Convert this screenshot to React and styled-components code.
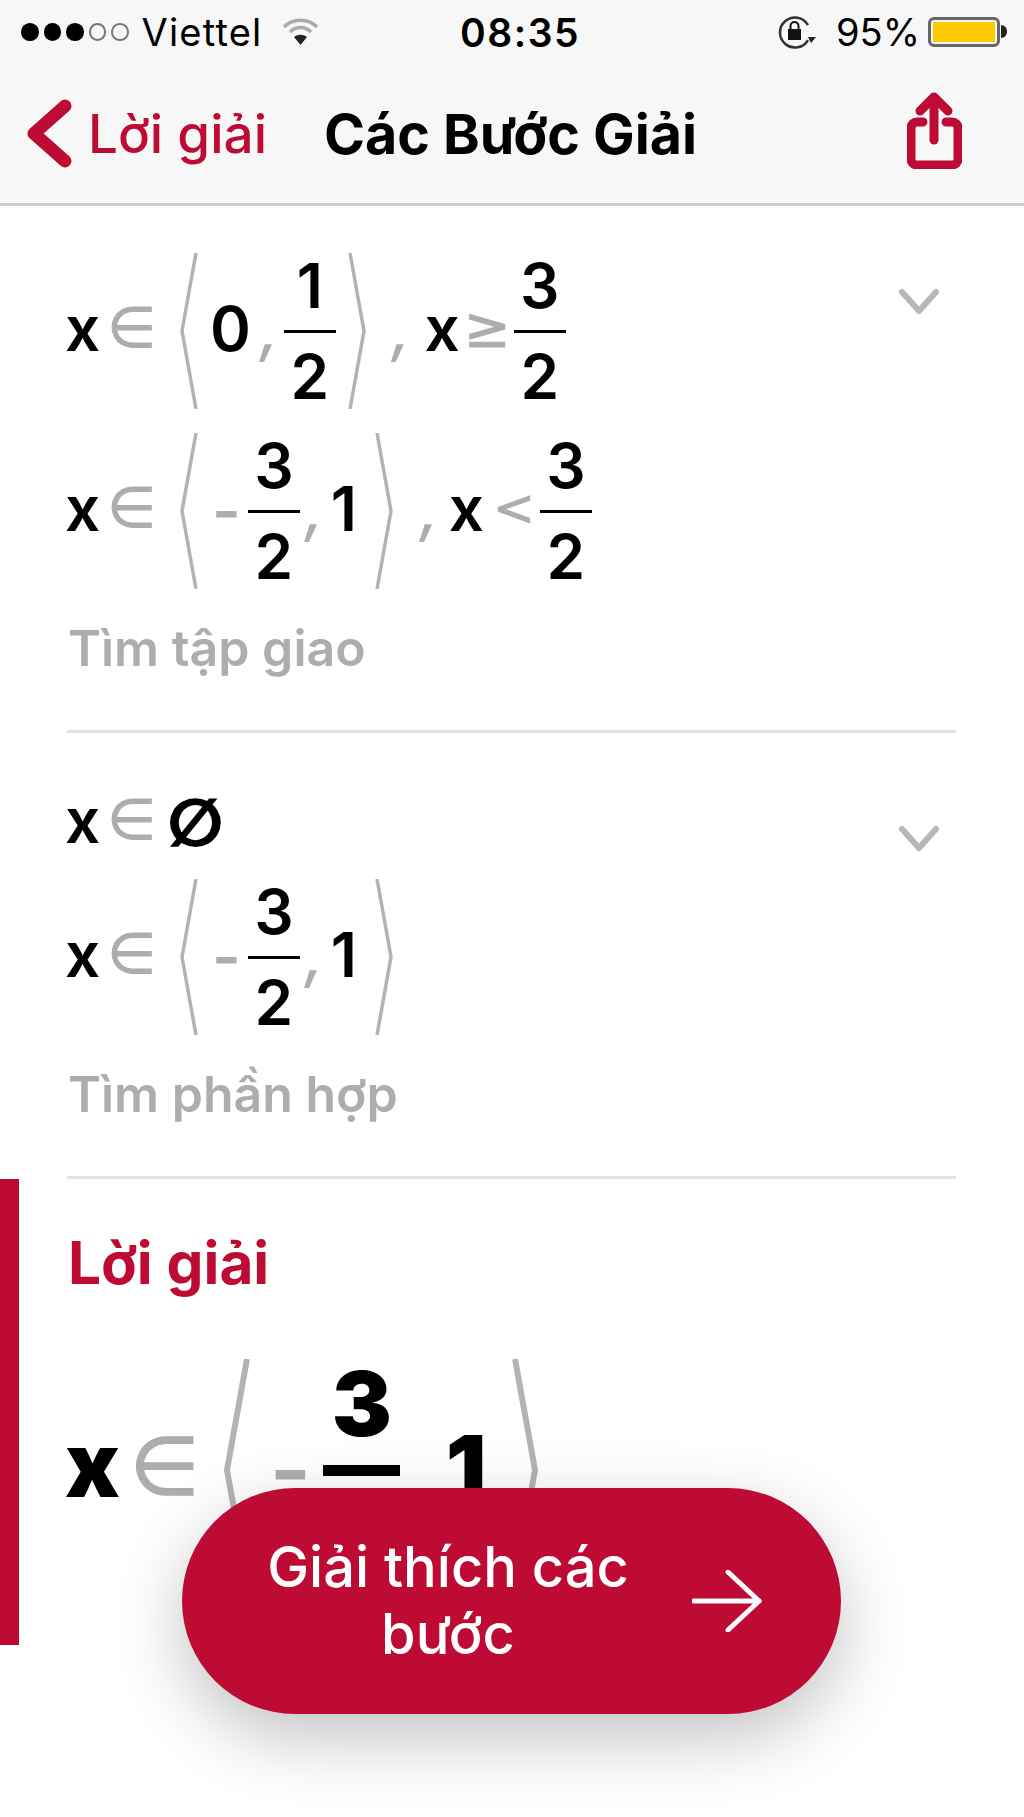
import React from 'react'
import styled, { createGlobalStyle } from 'styled-components'

const RED = '#bd0b33'
const GREY = '#adadad'

const GlobalStyle = createGlobalStyle`
  html, body {
    margin: 0;
    padding: 0;
    background: #fff;
  }
  * {
    box-sizing: border-box;
  }
`

const Page = styled.div`
  position: relative;
  width: 1024px;
  height: 1817px;
  overflow: hidden;
  background: #fff;
  color: #000;
  font-family: Inter, "Liberation Sans", sans-serif;
`

const Header = styled.header`
  height: 206px;
  background: #f7f7f7;
  border-bottom: 3px solid #cfcfcf;
`

const StatusBar = styled.div`
  display: grid;
  grid-template-columns: 439px auto 1fr;
  align-items: center;
  height: 64px;
  padding: 0 17px 0 21px;
  font-size: 38px;
`

const StatusLeft = styled.div`
  display: flex;
  align-items: center;
`

const Signal = styled.div`
  display: flex;
  gap: 5px;
  margin-right: 13px;
`

const Dot = styled.span`
  width: 17.5px;
  height: 17.5px;
  border-radius: 50%;
  background: ${({ $on }) => ($on ? '#000' : 'transparent')};
  border: ${({ $on }) => ($on ? 'none' : '2px solid #777')};
`

const Carrier = styled.span`
  margin-right: 20px;
  letter-spacing: 1.2px;
`

const Clock = styled.span`
  font-size: 39px;
  font-weight: 600;
  letter-spacing: 1.5px;
`

const StatusRight = styled.div`
  display: flex;
  align-items: center;
  justify-content: flex-end;
`

const Percent = styled.span`
  margin: 0 8px 0 19px;
`

const Battery = styled.div`
  position: relative;
  width: 72px;
  height: 30px;
  padding: 2px;
  border: 3px solid #666;
  border-radius: 6px;
  margin-right: 7px;

  &::after {
    content: '';
    position: absolute;
    right: -10px;
    top: 5px;
    width: 6px;
    height: 13px;
    border-radius: 0 6px 6px 0;
    background: #222;
  }
`

const BatteryFill = styled.div`
  height: 100%;
  background: #fdc900;
`

const NavBar = styled.nav`
  display: flex;
  align-items: center;
  height: 139px;
  padding: 0 62px 0 27px;
`

const BackLabel = styled.span`
  margin: 0 57px 0 16px;
  color: ${RED};
  font-size: 53px;
  font-weight: 500;
`

const Title = styled.h1`
  margin: 0;
  font-size: 55.5px;
  font-weight: 700;
`

const ShareButton = styled.svg`
  margin: 0 0 6px auto;
`

const Step = styled.section`
  display: flex;
  justify-content: space-between;
  margin: 0 68px 0 67px;
  padding: ${({ $top }) => $top}px 0 ${({ $bottom }) => $bottom}px;
  border-bottom: 3px solid #e2e2e2;
`

const StepBody = styled.div`
  display: flex;
  flex-direction: column;
`

const Expand = styled.svg`
  margin: ${({ $top }) => $top}px 16px 0 0;
`

const MathRow = styled.div`
  display: flex;
  align-items: center;
  height: ${({ $height }) => $height || 156}px;
  margin-bottom: ${({ $gap }) => $gap || 0}px;
  font-size: 62px;
  font-weight: 600;
  line-height: 62px;
`

const Var = styled.span`
  margin: 0 0 ${({ $lift }) => $lift || 4}px ${({ $left }) => $left || 0}px;
`

const Sign = styled.span`
  margin: 0 0 6px ${({ $left }) => $left || 0}px;
  color: ${GREY};
  font-weight: 400;
  font-family: "DejaVu Sans", sans-serif;
  font-size: ${({ $size }) => $size || 56}px;
  -webkit-text-stroke: ${({ $stroke }) => $stroke || 1}px ${GREY};
`

const Minus = styled.span`
  margin-left: ${({ $left }) => $left || 0}px;
  color: ${GREY};
  font-weight: 600;
`

const Comma = styled.span`
  margin: 0 0 4px ${({ $left }) => $left || 0}px;
  color: ${GREY};
  font-weight: 500;
  font-style: italic;
`

const Value = styled.span`
  margin: 0 0 4px ${({ $left }) => $left || 0}px;
`

const EmptySet = styled.span`
  margin-left: 12px;
  font-family: "DejaVu Sans", sans-serif;
  font-size: 64px;
  font-weight: 700;
  -webkit-text-stroke: 2px #000;
`

const Frac = styled.span`
  display: flex;
  flex-direction: column;
  align-items: center;
  gap: 21px;
  width: ${({ $width }) => $width || 52}px;
  margin-left: ${({ $left }) => $left || 0}px;
  line-height: 46px;
`

const FracLine = styled.span`
  width: 100%;
  height: 3px;
  background: #000;
`

const Angle = styled.svg`
  flex: none;
  margin-left: ${({ $left }) => $left || 0}px;
`

const Caption = styled.p`
  margin: 29px 0 0 1px;
  color: ${GREY};
  font-size: 50px;
  font-weight: 600;
  line-height: 60px;
`

const Answer = styled.section`
  height: 466px;
  padding: 54px 0 0 48px;
  border-left: 19px solid ${RED};
`

const AnswerTitle = styled.h2`
  margin: 0 0 66px 1px;
  color: ${RED};
  font-size: 58.5px;
  font-weight: 700;
  line-height: 60px;
`

const BigRow = styled(MathRow)`
  font-size: 90px;
  font-weight: 900;
  line-height: 90px;
`

const BigFrac = styled(Frac)`
  gap: 28px;
  line-height: 66px;
`

const BigLine = styled(FracLine)`
  height: 11px;
`

const ExplainButton = styled.button`
  position: absolute;
  left: 182px;
  top: 1488px;
  display: flex;
  align-items: center;
  width: 659px;
  height: 226px;
  padding: 0 0 0 66px;
  border: none;
  border-radius: 113px;
  background: ${RED};
  box-shadow: 0 24px 70px rgba(0, 0, 0, 0.24);
  color: #fff;
  font-family: Inter, "Liberation Sans", sans-serif;
  font-size: 56px;
  font-weight: 500;
  line-height: 67px;
`

const ExplainLabel = styled.span`
  width: 400px;
  margin-right: 44px;
  text-align: center;
`

const Wifi = () => (
  <svg width="37" height="28" viewBox="0 0 37 28" fill="none" stroke="#aaa" strokeWidth="3.5">
    <path d="M2 9 C11 0 26 0 35 9" />
    <path d="M8 14 C14 8 23 8 29 14" />
    <path d="M18.5 27 L12 19 C16 16 21 16 25 19 Z" fill="#222" stroke="none" />
  </svg>
)

const RotationLock = () => (
  <svg width="40" height="34" viewBox="0 0 40 34" fill="none">
    <path d="M31 25 A15 15 0 1 1 31 10" stroke="#333" strokeWidth="2.5" />
    <path d="M31 22 L39 22 L34 28 Z" fill="#222" />
    <rect x="11" y="14" width="13" height="11" fill="#111" />
    <path d="M13.5 14 V11 A4 4 0 0 1 21.5 11 V14" stroke="#111" strokeWidth="2" />
  </svg>
)

const BackChevron = () => (
  <svg width="45" height="69" viewBox="0 0 45 69" fill="none" stroke={RED} strokeWidth="13" strokeLinecap="round" strokeLinejoin="round">
    <polyline points="38,7 7,34.5 38,62" />
  </svg>
)

const ShareIcon = () => (
  <ShareButton width="55" height="77" viewBox="0 0 55 77" fill="none" stroke={RED} strokeWidth="9" strokeLinecap="round" strokeLinejoin="round">
    <path d="M27 48 V6" />
    <path d="M13 19 L27 5 L41 19" />
    <path d="M16 30 H10 A6 6 0 0 0 4 36 V67 A6 6 0 0 0 10 73 H45 A6 6 0 0 0 51 67 V36 A6 6 0 0 0 45 30 H39" />
  </ShareButton>
)

const ExpandIcon = ({ top }) => (
  <Expand $top={top} width="42" height="28" viewBox="0 0 42 28" fill="none" stroke="#b7b7b7" strokeWidth="6" strokeLinecap="round" strokeLinejoin="round">
    <polyline points="4,4 21,23 38,4" />
  </Expand>
)

const AngleOpen = ({ left, big }) => (
  <Angle $left={left} width={big ? 26 : 18} height={big ? 222 : 156} viewBox={big ? '0 0 26 222' : '0 0 18 156'} fill="none" stroke="#b3b3b3" strokeWidth={big ? 6 : 3.5}>
    <polyline points={big ? '23,0 3,111 23,222' : '16,0 2,78 16,156'} />
  </Angle>
)

const AngleClose = ({ left, big }) => (
  <Angle $left={left} width={big ? 26 : 18} height={big ? 222 : 156} viewBox={big ? '0 0 26 222' : '0 0 18 156'} fill="none" stroke="#b3b3b3" strokeWidth={big ? 6 : 3.5}>
    <polyline points={big ? '3,0 23,111 3,222' : '2,0 16,78 2,156'} />
  </Angle>
)

const Fraction = ({ top, bottom, left, width }) => (
  <Frac $left={left} $width={width}>
    <span>{top}</span>
    <FracLine />
    <span>{bottom}</span>
  </Frac>
)

const ArrowIcon = () => (
  <svg width="70" height="62" viewBox="0 0 70 62" fill="none" stroke="#fff" strokeWidth="5" strokeLinecap="round" strokeLinejoin="round">
    <path d="M2 31 H67" />
    <path d="M36 2 L67 31 L36 60" />
  </svg>
)

export default function App() {
  return (
    <Page>
      <GlobalStyle />
      <Header>
        <StatusBar>
          <StatusLeft>
            <Signal>
              <Dot $on />
              <Dot $on />
              <Dot $on />
              <Dot />
              <Dot />
            </Signal>
            <Carrier>Viettel</Carrier>
            <Wifi />
          </StatusLeft>
          <Clock>08:35</Clock>
          <StatusRight>
            <RotationLock />
            <Percent>95%</Percent>
            <Battery>
              <BatteryFill />
            </Battery>
          </StatusRight>
        </StatusBar>
        <NavBar>
          <BackChevron />
          <BackLabel>Lời giải</BackLabel>
          <Title>Các Bước Giải</Title>
          <ShareIcon />
        </NavBar>
      </Header>

      <Step $top={47} $bottom={52}>
        <StepBody>
          <MathRow $gap={24}>
            <Var $left={-2}>x</Var>
            <Sign $left={7}>∈</Sign>
            <AngleOpen left={24} />
            <Value $left={12}>0</Value>
            <Comma $left={9}>,</Comma>
            <Fraction top="1" bottom="2" left={5} />
            <AngleClose left={12} />
            <Comma $left={26}>,</Comma>
            <Var $left={14}>x</Var>
            <Sign $left={4} $size={56}>≥</Sign>
            <Fraction top="3" bottom="2" left={3} />
          </MathRow>
          <MathRow>
            <Var $left={-2}>x</Var>
            <Sign $left={7}>∈</Sign>
            <AngleOpen left={24} />
            <Minus $left={14}>-</Minus>
            <Fraction top="3" bottom="2" left={7} />
            <Comma $left={5}>,</Comma>
            <Value $left={7}>1</Value>
            <AngleClose left={18} />
            <Comma $left={27}>,</Comma>
            <Var $left={10}>x</Var>
            <Sign $left={9} $size={50}>&lt;</Sign>
            <Fraction top="3" bottom="2" left={5} />
          </MathRow>
          <Caption>Tìm tập giao</Caption>
        </StepBody>
        <ExpandIcon top={35} />
      </Step>

      <Step $top={60} $bottom={52}>
        <StepBody>
          <MathRow $height={60} $gap={26}>
            <Var $left={-2}>x</Var>
            <Sign $left={7}>∈</Sign>
            <EmptySet>∅</EmptySet>
          </MathRow>
          <MathRow>
            <Var $left={-2}>x</Var>
            <Sign $left={7}>∈</Sign>
            <AngleOpen left={24} />
            <Minus $left={14}>-</Minus>
            <Fraction top="3" bottom="2" left={7} />
            <Comma $left={5}>,</Comma>
            <Value $left={7}>1</Value>
            <AngleClose left={18} />
          </MathRow>
          <Caption>Tìm phần hợp</Caption>
        </StepBody>
        <ExpandIcon top={32} />
      </Step>

      <Answer>
        <AnswerTitle>Lời giải</AnswerTitle>
        <BigRow $height={222}>
          <Var $left={-2} $lift={10}>x</Var>
          <Sign $left={10} $size={80} $stroke={1.5}>∈</Sign>
          <AngleOpen left={24} big />
          <Minus $left={20}>-</Minus>
          <BigFrac $left={12} $width={77}>
            <span>3</span>
            <BigLine />
            <span>2</span>
          </BigFrac>
          <Comma $left={8}>,</Comma>
          <Value $left={10}>1</Value>
          <AngleClose left={26} big />
        </BigRow>
      </Answer>

      <ExplainButton>
        <ExplainLabel>Giải thích các bước</ExplainLabel>
        <ArrowIcon />
      </ExplainButton>
    </Page>
  )
}
